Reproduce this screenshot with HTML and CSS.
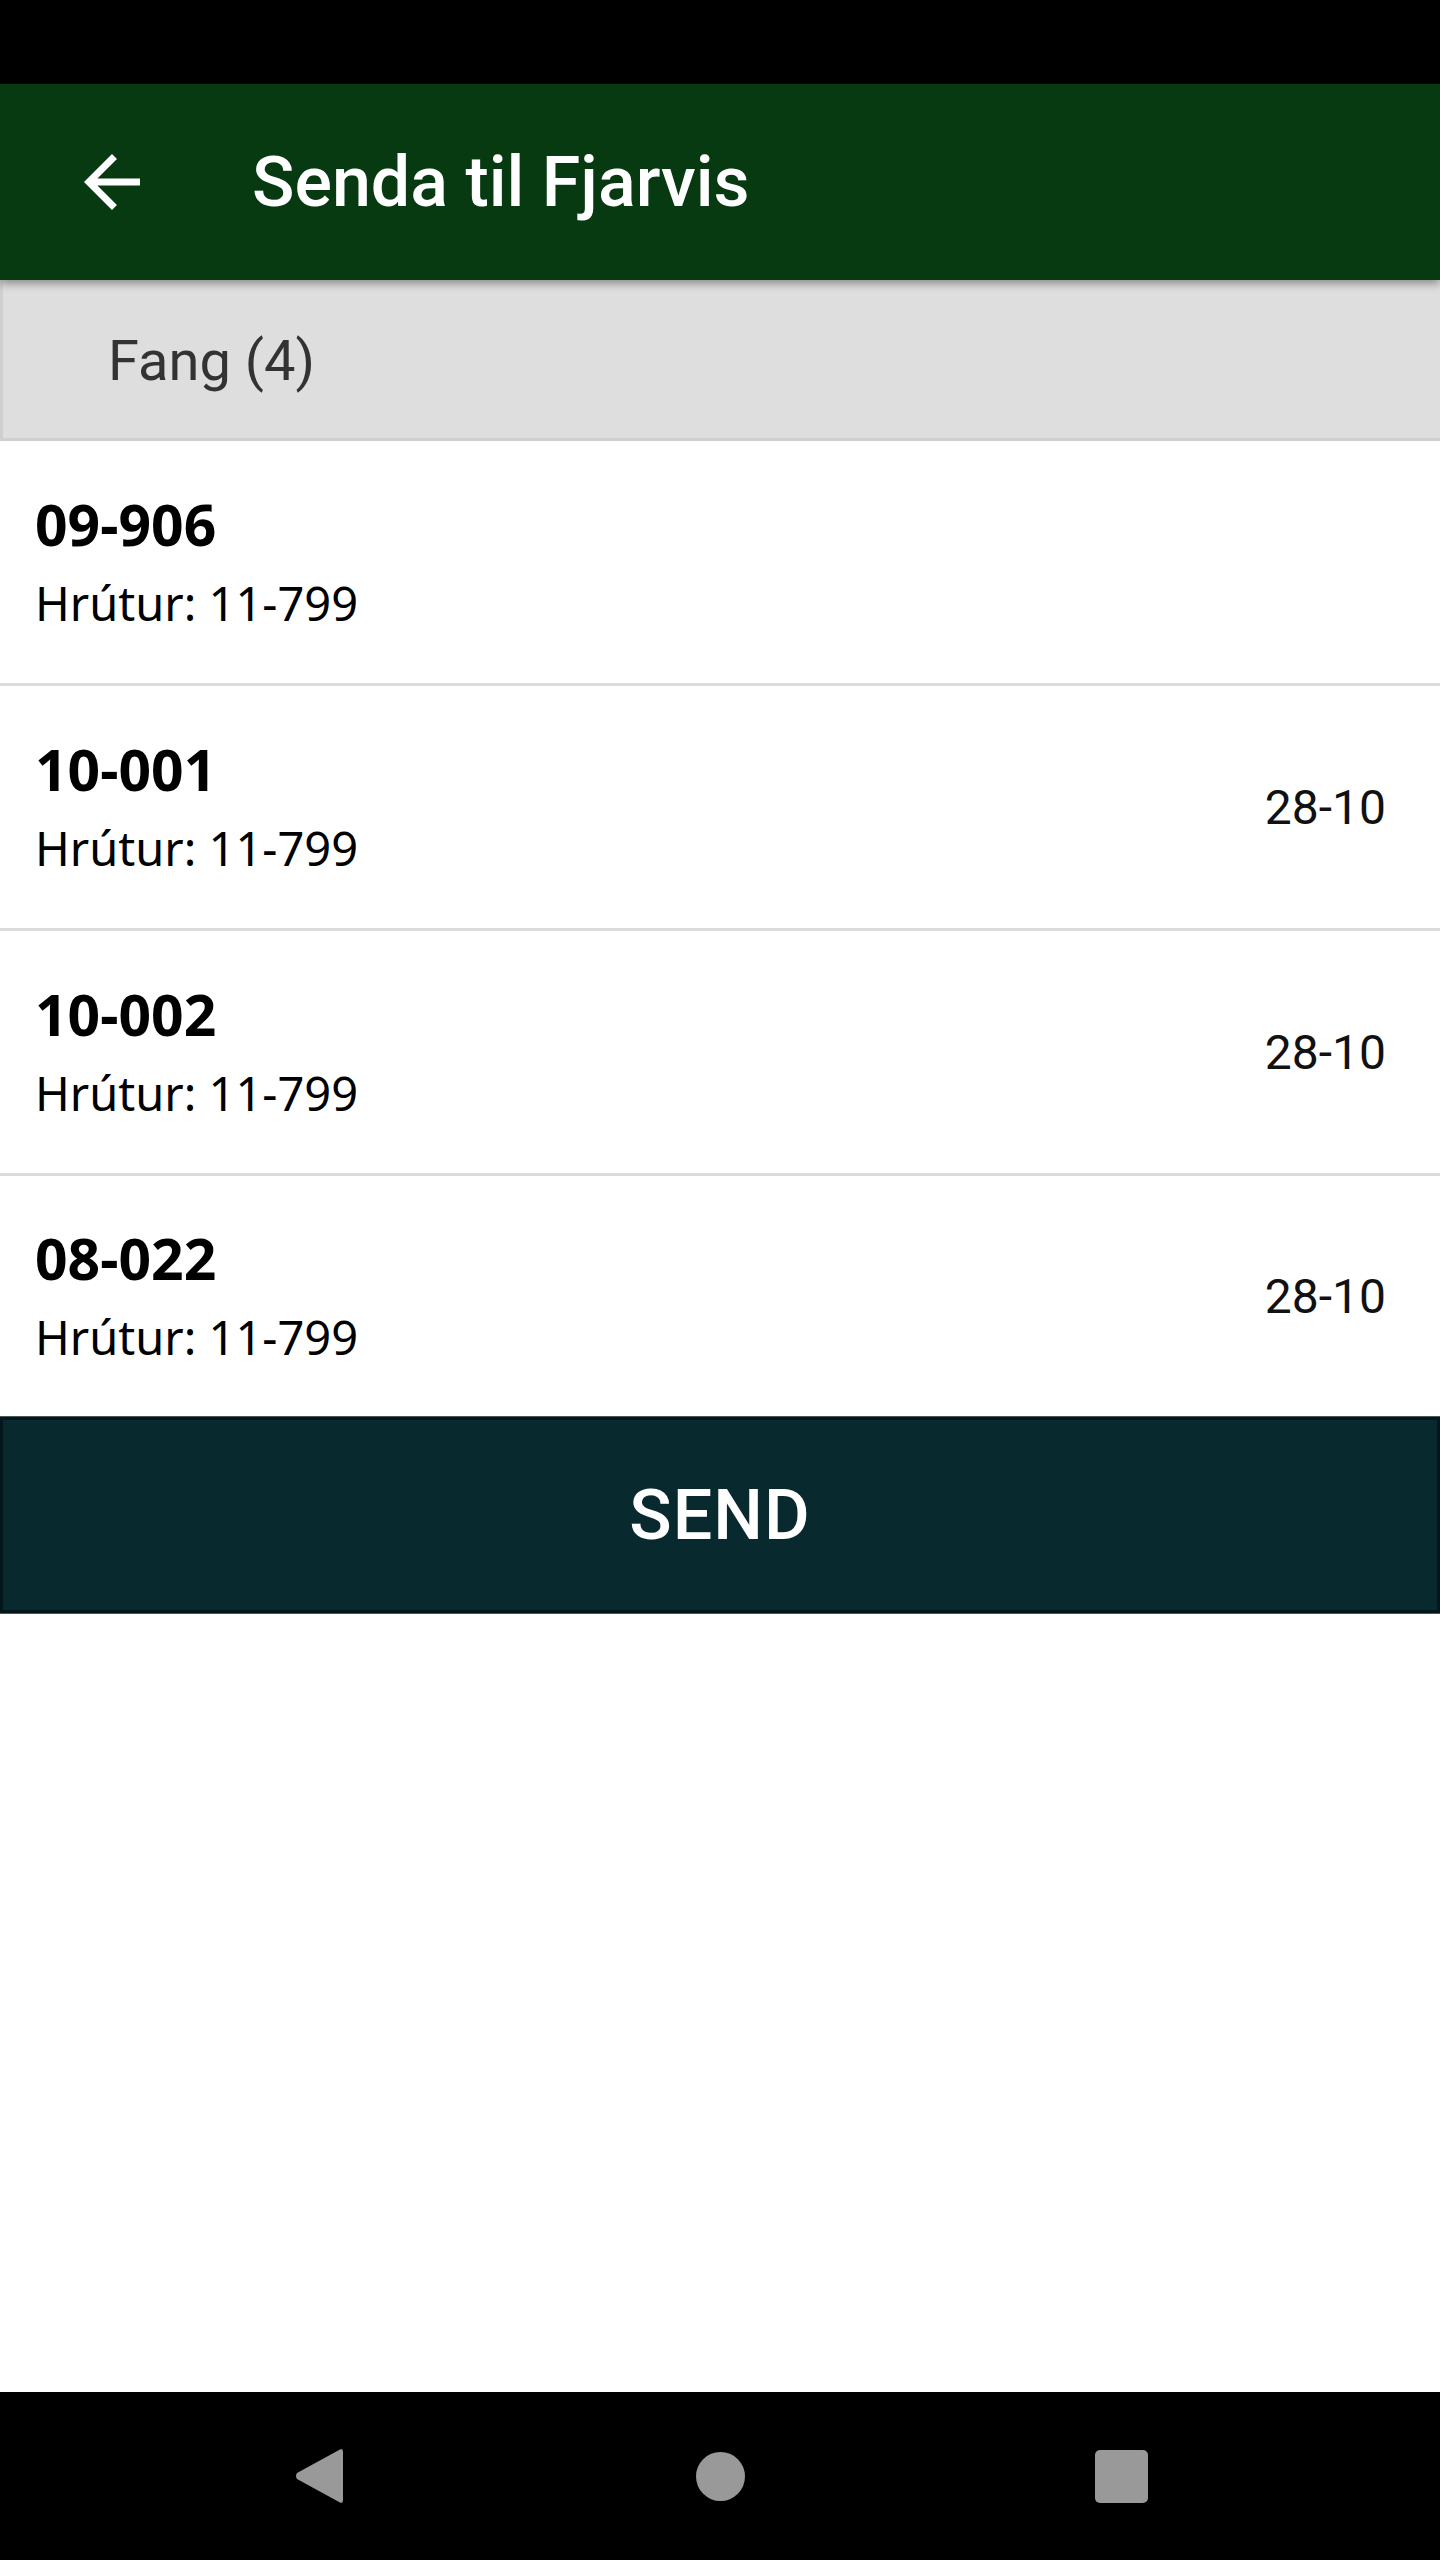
FILE: index.html
```html
<!DOCTYPE html>
<html lang="is">
<head>
    <meta charset="UTF-8">
    <meta name="viewport" content="width=device-width, initial-scale=1.0">
    <title>Senda til Fjarvis</title>
    <link rel="stylesheet" href="styles.css">
</head>
<body>
    <div class="screen">
        <div class="status-bar"></div>

        <header class="app-bar">
            <svg class="back-icon" viewBox="0 0 24 24" width="84" height="84">
                <path d="M20 11H7.83l5.59-5.59L12 4l-8 8 8 8 1.41-1.41L7.83 13H20v-2z" fill="#fff"/>
            </svg>
            <h1 class="title">Senda til Fjarvis</h1>
        </header>

        <main class="content">
            <div class="section-header">Fang (4)</div>

            <ul class="catch-list">
                <li class="catch-row">
                    <div class="catch-info">
                        <span class="catch-id">09-906</span>
                        <span class="catch-ram">Hrútur: 11-799</span>
                    </div>
                </li>
                <li class="catch-row">
                    <div class="catch-info">
                        <span class="catch-id">10-001</span>
                        <span class="catch-ram">Hrútur: 11-799</span>
                    </div>
                    <span class="catch-date">28-10</span>
                </li>
                <li class="catch-row">
                    <div class="catch-info">
                        <span class="catch-id">10-002</span>
                        <span class="catch-ram">Hrútur: 11-799</span>
                    </div>
                    <span class="catch-date">28-10</span>
                </li>
                <li class="catch-row">
                    <div class="catch-info">
                        <span class="catch-id">08-022</span>
                        <span class="catch-ram">Hrútur: 11-799</span>
                    </div>
                    <span class="catch-date">28-10</span>
                </li>
            </ul>

            <button class="send-button">SEND</button>
        </main>

        <nav class="nav-bar">
            <svg class="nav-icon" viewBox="0 0 48 56" width="48" height="56">
                <path d="M45 1.5 Q48 0 48 4 L48 52 Q48 56 45 54.5 L2 31 Q0 28 2 25 Z" fill="#999"/>
            </svg>
            <span class="nav-icon nav-home"></span>
            <span class="nav-icon nav-recent"></span>
        </nav>
    </div>
</body>
</html>
```

FILE: styles.css
```css
* {
    margin: 0;
    padding: 0;
    box-sizing: border-box;
}

body {
    font-family: Roboto, 'Noto Sans', sans-serif;
    background: #fff;
    color: #000;
}

.screen {
    width: 1440px;
    height: 2560px;
    display: flex;
    flex-direction: column;
}

.status-bar {
    height: 84px;
    background: #000;
}

.app-bar {
    height: 196px;
    background: #083a12;
    display: flex;
    align-items: center;
    padding-left: 70px;
    box-shadow: 0 4px 8px rgba(0,0,0,0.35);
    position: relative;
    z-index: 1;
}

.back-icon {
    display: block;
    flex-shrink: 0;
}

.title {
    margin-left: 98px;
    color: #fff;
    font-family: Roboto, sans-serif;
    font-weight: 500;
    font-size: 70px;
    line-height: 1;
}

.content {
    flex: 1;
}

/* group header above the list */
.section-header {
    height: 161px;
    background: #dedede;
    border-left: 3px solid #cfcfcf;
    border-bottom: 3px solid #cfcfcf;
    display: flex;
    align-items: center;
    padding-left: 105px;
    padding-top: 4px;
    font-family: Roboto, sans-serif;
    font-size: 56px;
    color: #333;
}

.catch-list {
    list-style: none;
}

.catch-row {
    height: 245px;
    display: flex;
    justify-content: space-between;
    align-items: center;
    padding: 0 54px 0 35px;
    border-bottom: 3px solid #dcdcdc;
}

.catch-row:last-child {
    height: 241px;
    border-bottom: none;
}

.catch-info {
    display: flex;
    flex-direction: column;
    padding-top: 2px;
}

.catch-id {
    font-family: 'Noto Sans', sans-serif;
    font-weight: 700;
    font-size: 57px;
    line-height: 76px;
}

.catch-ram {
    font-family: 'Noto Sans', sans-serif;
    font-size: 47px;
    line-height: 76px;
    margin-top: 3px;
}

.catch-date {
    font-family: Roboto, sans-serif;
    font-size: 48px;
    color: #111;
}

.send-button {
    display: block;
    width: 100%;
    height: 196px;
    background: #082a2f;
    border: 3px solid #03161a;
    box-shadow: 0 -1px 0 #4b5658, 0 1px 0 #4b5658;
    color: #fff;
    font-family: Roboto, sans-serif;
    font-weight: 500;
    font-size: 70px;
    letter-spacing: 1px;
    cursor: pointer;
}

.nav-bar {
    height: 168px;
    background: #000;
    display: flex;
    justify-content: center;
    align-items: center;
    gap: 346px;
}

.nav-icon {
    display: block;
    width: 56px;
    flex-shrink: 0;
}

svg.nav-icon {
    width: 48px;
    margin: 0 4px;
}

.nav-home {
    width: 49px;
    height: 49px;
    margin: 0 3px;
    border-radius: 50%;
    background: #999;
}

.nav-recent {
    width: 53px;
    height: 53px;
    margin: 0 1px;
    border-radius: 5px;
    background: #999;
}
```
